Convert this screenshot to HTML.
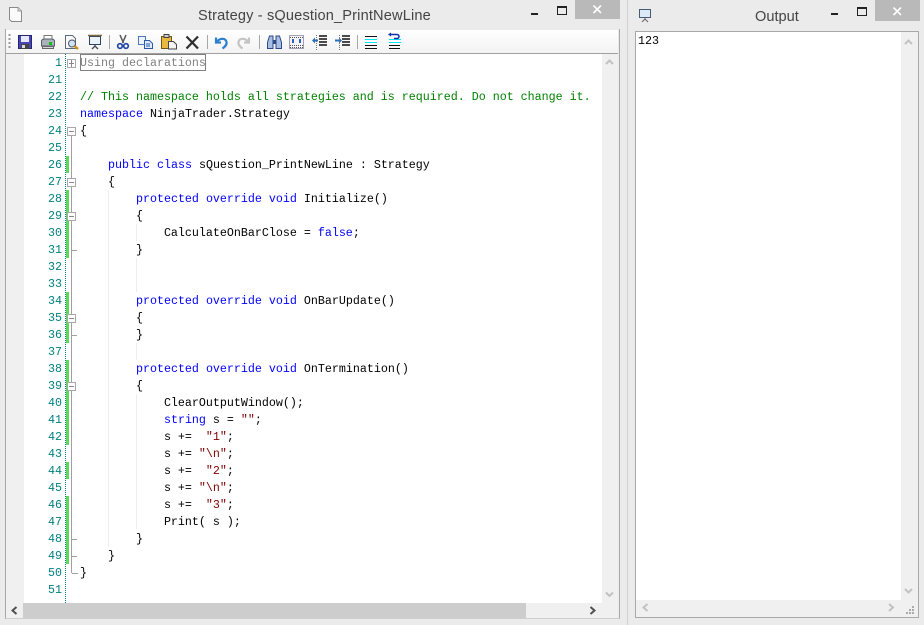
<!DOCTYPE html>
<html><head><meta charset="utf-8"><title>Strategy</title>
<style>
html,body{margin:0;padding:0;width:924px;height:625px;overflow:hidden;background:#ebebeb}
body{position:relative;font-family:"Liberation Sans",sans-serif}
div,pre,svg{position:absolute;margin:0}
pre{font:11.67px/17px "Liberation Mono",monospace;color:#000}
.k{color:#0000ff}.c{color:#008000}.s{color:#800000}
.b{background:#a0a0a0}.g{background:#60d860;left:66px;width:3px}.i{background:#eeeeee;width:1px}
.box{left:67px;width:7px;height:7px;border:1px solid #a8a8a8;background:#fff}
.box:after{content:"";position:absolute;left:1px;top:3px;width:5px;height:1px;background:#888}
.t{color:#444;font-size:14.6px;line-height:20px;top:6px}
</style></head><body>

<!-- frames -->
<div style="left:627px;top:0;width:1px;height:625px;background:#d2d2d2"></div>
<div style="left:5px;top:29px;width:615px;height:590px;border-right:1px solid #a8a8a8;border-bottom:1px solid #cfcfcf;border-left:1px solid #a8a8a8;box-sizing:border-box"></div>

<!-- title bar left -->
<svg style="left:8px;top:6px" width="15" height="17" viewBox="0 0 15 17"><path d="M1.500 1.500H10L13.500 5V15.500H3.500L1.500 13.500Z" fill="#fafafa" stroke="#8a8a8a"/><path d="M10 1.500V5H13.500" fill="#ddd" stroke="#999"/></svg>
<div class="t" style="left:198px;width:228px;white-space:nowrap;letter-spacing:.15px">Strategy - sQuestion_PrintNewLine</div>
<div style="left:531px;top:13px;width:7px;height:2px;background:#222"></div>
<div style="left:557px;top:6px;width:8px;height:6px;border:1px solid #222;border-top-width:2px"></div>
<div style="left:575px;top:0;width:45px;height:19px;background:#b9b9b9"></div>
<svg style="left:592px;top:5px" width="11" height="9"><path d="M1.500 .5L9 8M9 .5L1.500 8" stroke="#fff" stroke-width="1.600" fill="none"/></svg>

<!-- toolbar -->
<div style="left:6px;top:30px;width:612px;height:23px;background:linear-gradient(#ffffff,#f3f3f3);border-bottom:1px solid #a0a0a0"></div>
<svg style="left:0;top:30px" width="410" height="24" viewBox="0 30 410 24">
<path d="M9.500 34v15" stroke="#999" stroke-width="2" stroke-dasharray="2 2"/>
<path d="M109.500 35v14M207.500 35v14M259.500 35v14M357.500 35v14" stroke="#a8a8a8"/>
<!-- save -->
<rect x="18.500" y="35.500" width="13" height="13" fill="#4646b8" stroke="#26266e"/><rect x="21" y="36" width="8" height="6" fill="#e8e8f8"/><rect x="21" y="44" width="8" height="5" fill="#444"/><rect x="22" y="45" width="3" height="3" fill="#ddd"/>
<!-- print -->
<path d="M44 35.500h8v5h-8z" fill="#fff" stroke="#777"/><path d="M41.500 40.500q1-1.500 3-1.500h7q2 0 3 1.500v5.500h-13z" fill="#aab2be" stroke="#5a606a"/><path d="M42.500 46.500h11v2h-11z" fill="#d8d8d8" stroke="#666"/><rect x="49" y="42" width="3" height="3" fill="#10c010"/>
<!-- preview -->
<path d="M65.500 35.500h7l3 3v10h-10z" fill="#fafafa" stroke="#5d6a7c"/><circle cx="72" cy="43.500" r="3.500" fill="#cfe4f8" stroke="#556"/><path d="M74.500 46l3.500 3" stroke="#d09018" stroke-width="2.400"/>
<!-- monitor -->
<rect x="89.500" y="36.500" width="11" height="8" fill="#eaf2fb" stroke="#2f4060"/><path d="M88 35.500h14" stroke="#7a6a40" stroke-width="1.500"/><path d="M95 45v2M92 49l3-3 3 3" stroke="#445" fill="none" stroke-width="1.300"/>
<!-- cut -->
<path d="M120 35l3.500 8M126 35l-3.500 8" stroke="#555" stroke-width="1.500"/><circle cx="120" cy="46" r="2.300" fill="none" stroke="#1f45a8" stroke-width="1.700"/><circle cx="126" cy="46" r="2.300" fill="none" stroke="#1f45a8" stroke-width="1.700"/>
<!-- copy -->
<path d="M138.500 36.500h7v8h-7z" fill="#eef4ff" stroke="#4a78b8"/><path d="M144.500 40.500h5l3 3v5h-8z" fill="#dfeaff" stroke="#2a5aa8"/><path d="M146 44h4M146 46h4" stroke="#2a5aa8"/>
<!-- paste -->
<path d="M161.500 36.500h10v12h-10z" fill="#e8b840" stroke="#705418"/><rect x="164" y="34.500" width="5" height="3" fill="#ccc" stroke="#444"/><path d="M168.500 41.500h5l3 3v4.500h-8z" fill="#f4f4f4" stroke="#444"/>
<!-- delete -->
<path d="M186.500 36.500L198 48.500M198 36.500L186.500 48.500" stroke="#2e2e2e" stroke-width="2.200"/>
<!-- undo -->
<path d="M216 37.500v5h5M216.500 42c3-4 9-4.500 10 0 .7 3-2 5-4 6.500" fill="none" stroke="#2f7fd0" stroke-width="2.200"/>
<!-- redo -->
<path d="M249 37.500v5h-5M248.500 42c-3-4-9-4.500-10 0-.7 3 2 5 4 6.500" fill="none" stroke="#c4c4c4" stroke-width="2.200"/>
<!-- binoculars -->
<path d="M267.500 48.500v-6l2-6.500h3.500v12.500zM281.500 48.500v-6l-2-6.500h-3.500v12.500z" fill="#a8bfe4" stroke="#2d4a86"/><path d="M273 40h3v4h-3z" fill="#2d4a86"/>
<!-- grid -->
<rect x="289.500" y="35.500" width="14" height="13" fill="#f4f4fa" stroke="#4a4a6a" stroke-dasharray="1 1"/><path d="M290 37.500h13M290 45.500h13M290 47.500h13" stroke="#555" stroke-dasharray="1 1"/><path d="M293 39v4M300 39v4" stroke="#2a60c0" stroke-width="2"/>
<!-- indent -->
<path d="M319 36h8M319 39h8M319 42h8M319 45h8" stroke="#111" stroke-width="1.500"/><path d="M313 40.500h5" stroke="#2a70c0" stroke-width="2"/><path d="M312 40.500l3-3v6z" fill="#2a70c0"/><path d="M316.500 35v15" stroke="#777" stroke-dasharray="1 1"/>
<path d="M342 36h8M342 39h8M342 42h8M342 45h8" stroke="#111" stroke-width="1.500"/><path d="M335 40.500h5" stroke="#2a70c0" stroke-width="2"/><path d="M342 40.500l-3-3v6z" fill="#2a70c0"/><path d="M339.500 35v15" stroke="#777" stroke-dasharray="1 1"/>
<!-- lines -->
<path d="M365 36.500h12M365 45.500h12M365 48.500h12" stroke="#111"/><path d="M365 39.500h12M365 42.500h12" stroke="#00e8f0"/>
<path d="M389 48.500h11M389 45.500h11" stroke="#111"/><path d="M389 42.500h12M389 39.500h12" stroke="#00e8f0"/><path d="M391 34.500h6a2 2 0 0 1 0 4h-3" fill="none" stroke="#1030b0" stroke-width="1.500"/><path d="M388 34.500l3-2v4z" fill="#1030b0"/>
</svg>

<!-- editor -->
<div style="left:6px;top:54px;width:596px;height:549px;background:#fff"></div>
<div style="left:6px;top:54px;width:18px;height:549px;background:#f0f0f0"></div>
<div style="left:65px;top:54px;width:1px;height:549px;background:repeating-linear-gradient(#008080 0 1px,transparent 1px 2px)"></div>

<pre style="left:24px;top:55px;width:38px;text-align:right;color:#008080">1
21
22
23
24
25
26
27
28
29
30
31
32
33
34
35
36
37
38
39
40
41
42
43
44
45
46
47
48
49
50
51</pre>

<!-- change bars -->
<div class="g" style="top:156px;height:17px"></div>
<div class="g" style="top:190px;height:68px"></div>
<div class="g" style="top:292px;height:51px"></div>
<div class="g" style="top:360px;height:85px"></div>
<div class="g" style="top:462px;height:17px"></div>
<div class="g" style="top:496px;height:68px"></div>

<!-- fold lines -->
<div class="b" style="left:71px;top:130px;width:1px;height:443px"></div>
<div class="b" style="left:72px;top:250px;width:5px;height:1px"></div>
<div class="b" style="left:72px;top:335px;width:5px;height:1px"></div>
<div class="b" style="left:72px;top:539px;width:5px;height:1px"></div>
<div class="b" style="left:72px;top:556px;width:5px;height:1px"></div>
<div class="b" style="left:72px;top:573px;width:6px;height:1px"></div>
<div class="box" style="top:59px"></div>
<div style="left:71px;top:60px;width:1px;height:7px;background:#888"></div>
<div class="box" style="top:127px"></div>
<div class="box" style="top:178px"></div>
<div class="box" style="top:212px"></div>
<div class="box" style="top:314px"></div>
<div class="box" style="top:382px"></div>

<!-- indent guides -->
<div class="i" style="left:108px;top:190px;height:357px"></div>
<div class="i" style="left:136px;top:224px;height:17px"></div>
<div class="i" style="left:136px;top:258px;height:34px"></div>
<div class="i" style="left:136px;top:343px;height:17px"></div>
<div class="i" style="left:136px;top:394px;height:135px"></div>

<div style="left:80px;top:54px;width:124px;height:15px;border:1px solid #808080"></div>
<pre style="left:80px;top:55px"><span style="color:#808080">Using declarations</span>

<span class="c">// This namespace holds all strategies and is required. Do not change it.</span>
<span class="k">namespace</span> NinjaTrader.Strategy
{

    <span class="k">public</span> <span class="k">class</span> sQuestion_PrintNewLine : Strategy
    {
        <span class="k">protected</span> <span class="k">override</span> <span class="k">void</span> Initialize()
        {
            CalculateOnBarClose = <span class="k">false</span>;
        }


        <span class="k">protected</span> <span class="k">override</span> <span class="k">void</span> OnBarUpdate()
        {
        }

        <span class="k">protected</span> <span class="k">override</span> <span class="k">void</span> OnTermination()
        {
            ClearOutputWindow();
            <span class="k">string</span> s = <span class="s">""</span>;
            s +=  <span class="s">"1"</span>;
            s += <span class="s">"\n"</span>;
            s +=  <span class="s">"2"</span>;
            s += <span class="s">"\n"</span>;
            s +=  <span class="s">"3"</span>;
            Print( s );
        }
    }
}</pre>

<!-- editor scrollbars -->
<div style="left:602px;top:54px;width:16px;height:549px;background:#f0f0f0"></div>
<div style="left:6px;top:603px;width:612px;height:15px;background:#f0f0f0"></div>
<div style="left:23px;top:603px;width:503px;height:15px;background:#cdcdcd"></div>
<svg style="left:0;top:0" width="924" height="625">
<g fill="none" stroke-width="2">
<path d="M606 64l3.500-3.500 3.500 3.500M606 592.500l3.500 3.500 3.500-3.500" stroke="#c2c2c2"/>
<path d="M16.500 607l-4 3.500 4 3.500M590.500 607l4 3.500-4 3.500" stroke="#505050"/>
</g>
</svg>

<!-- output window -->
<svg style="left:638px;top:8px" width="15" height="15" viewBox="0 0 15 15"><rect x="1.500" y="1.500" width="11" height="8" fill="#dce9f6" stroke="#4a5a70"/><path d="M7 10v2M4 14l3-3 3 3" stroke="#666" fill="none"/></svg>
<div class="t" style="left:755px;top:7px;width:50px;white-space:nowrap">Output</div>
<div style="left:831px;top:13px;width:7px;height:2px;background:#222"></div>
<div style="left:857px;top:7px;width:8px;height:6px;border:1px solid #222;border-top-width:2px"></div>
<div style="left:875px;top:0;width:45px;height:21px;background:#b9b9b9"></div>
<svg style="left:892px;top:7px" width="11" height="9"><path d="M1.500 .5L9 8M9 .5L1.500 8" stroke="#fff" stroke-width="1.600" fill="none"/></svg>

<div style="left:635px;top:31px;width:284px;height:587px;box-sizing:border-box;border:1px solid #a8a8a8;background:#f0f0f0"></div>
<div style="left:636px;top:32px;width:265px;height:568px;background:#fff"></div>
<pre style="left:638px;top:33px">123</pre>
<svg style="left:0;top:0" width="924" height="625">
<g fill="none" stroke-width="2" stroke="#c2c2c2">
<path d="M905 44l3.500-3.500 3.500 3.500M905 589l3.500 3.500 3.500-3.500"/>
<path d="M647.500 604l-4 3.500 4 3.500M889 604l4 3.500-4 3.500"/>
</g>
<path d="M912 606h2v2h-2zM909 609h2v2h-2zM912 609h2v2h-2zM906 612h2v2h-2zM909 612h2v2h-2zM912 612h2v2h-2z" fill="#aaa"/>
</svg>
</body></html>
